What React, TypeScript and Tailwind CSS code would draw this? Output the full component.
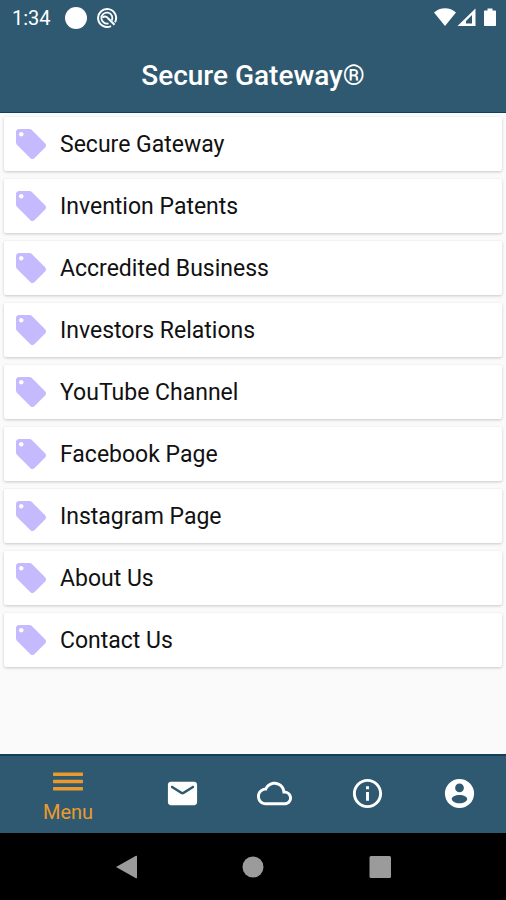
import type { ReactNode } from "react";

const links = [
  "Secure Gateway",
  "Invention Patents",
  "Accredited Business",
  "Investors Relations",
  "YouTube Channel",
  "Facebook Page",
  "Instagram Page",
  "About Us",
  "Contact Us",
];

function Glyph({ d, className }: { d: string; className: string }) {
  return (
    <svg viewBox="0 0 24 24" fill="currentColor" fillRule="evenodd" className={className} aria-hidden="true">
      <path d={d} />
    </svg>
  );
}

const TAG =
  "M21.41 11.58l-9-9C12.05 2.22 11.55 2 11 2H4c-1.1 0-2 .9-2 2v7c0 .55.22 1.05.59 1.42l9 9c.36.36.86.58 1.41.58.55 0 1.05-.22 1.41-.59l7-7c.37-.36.59-.86.59-1.41 0-.55-.23-1.06-.59-1.42zM5.5 7C4.67 7 4 6.33 4 5.5S4.67 4 5.5 4 7 4.67 7 5.5 6.33 7 5.5 7z";

const tabs = [
  {
    label: "Mail",
    d: "M20 4H4c-1.1 0-2 .9-2 2v12c0 1.1.9 2 2 2h16c1.1 0 2-.9 2-2V6c0-1.1-.9-2-2-2zM19.6 8.25l-6.54 4.09c-.65.41-1.47.41-2.12 0L4.4 8.25c-.25-.16-.4-.43-.4-.72 0-.67.73-1.07 1.3-.72L12 11l6.7-4.19c.57-.35 1.3.05 1.3.72 0 .29-.15.56-.4.72z",
  },
  {
    label: "Cloud",
    d: "M19.35 10.04C18.67 6.59 15.64 4 12 4 9.11 4 6.61 5.64 5.36 8.04 2.35 8.36 0 10.9 0 14c0 3.31 2.69 6 6 6h13c2.76 0 5-2.24 5-5 0-2.64-2.05-4.78-4.65-4.96zM19 18H6c-2.21 0-4-1.79-4-4s1.79-4 4-4h.71C7.37 7.69 9.48 6 12 6c3.04 0 5.5 2.46 5.5 5.5v.5H19c1.66 0 3 1.34 3 3s-1.34 3-3 3z",
  },
  {
    label: "Information",
    d: "M11 7h2v2h-2zm0 4h2v6h-2zm1-9C6.48 2 2 6.48 2 12s4.48 10 10 10 10-4.48 10-10S17.52 2 12 2zm0 18c-4.41 0-8-3.59-8-8s3.59-8 8-8 8 3.59 8 8-3.59 8-8 8z",
  },
  {
    label: "Account",
    d: "M12 2a10 10 0 1 0 0 20 10 10 0 0 0 0-20zM12 5.2a3 3 0 1 1 0 6 3 3 0 0 1 0-6zM12 13c3 0 5.3 1.2 5.3 2.7S15 18.6 12 18.6s-5.3-1.4-5.3-2.9S9 13 12 13z",
  },
];

function SystemButton({ label, children }: { label: string; children: ReactNode }) {
  return (
    <button type="button" aria-label={label} className="flex items-center justify-center text-[#9b9b9b]">
      <svg viewBox="0 0 24 24" fill="currentColor" className="size-6" aria-hidden="true">
        {children}
      </svg>
    </button>
  );
}

export default function App() {
  return (
    <div className="flex min-h-screen flex-col bg-[#fafafa] font-['Roboto','Liberation_Sans',sans-serif] text-[#111]">
      <header className="border-b border-[#123f59] bg-[#2f5970] text-white">
        <div className="flex h-9 items-center justify-between pr-2 pl-3">
          <div className="flex items-center">
            <span className="w-[53px] text-[20px]">1:34</span>
            <span className="size-[22px] rounded-full bg-white" />
            <svg viewBox="0 0 22 22" fill="none" stroke="currentColor" className="ml-[9px] size-[22px]" aria-hidden="true">
              <path strokeWidth="2" d="M15 19.1A9 9 0 1 1 19 15.300" />
              <path strokeWidth="1.800" d="M15.800 13.500A5.500 5.500 0 1 0 12.500 16.300" />
              <path strokeWidth="2" d="M6.500 10.500c2.500-2 4-1 5.500.7l6.500 6.600" />
            </svg>
          </div>
          <svg viewBox="0 0 64 22" fill="currentColor" className="h-[22px] w-16" aria-hidden="true">
            <path d="M0 5.500C6-.2 16-.2 22 5.500L11 19z" />
            <path fillRule="evenodd" d="M41.500 1.500V19H23.500zM38 8V16.500H32V14z" />
            <path d="M51 3.500h2.500V1.500h5v2h2.500c.6 0 1 .4 1 1V18c0 .6-.4 1-1 1H51c-.6 0-1-.4-1-1V4.500c0-.6.4-1 1-1z" />
          </svg>
        </div>
        <h1 className="flex h-[76px] items-center justify-center pt-[3px] text-[28px] font-medium">Secure Gateway®</h1>
      </header>

      <main className="flex-1 px-1 pt-1 pb-4">
        <ul className="flex flex-col gap-2">
          {links.map((name) => (
            <li key={name}>
              <a
                href="#"
                className="flex h-[54px] items-center gap-[11px] rounded-xs bg-white pl-[9px] text-[23px] shadow-[0_1px_3px_rgba(0,0,0,0.2)]"
              >
                <Glyph d={TAG} className="size-9 text-[#c5bafd]" />
                <span className="pt-[3px]">{name}</span>
              </a>
            </li>
          ))}
        </ul>
      </main>

      <nav aria-label="Main" className="flex h-[79px] border-t-2 border-[#123f59] bg-[#2f5970] text-white">
        <button type="button" className="flex w-[136px] flex-col items-center justify-center gap-1 pt-1 text-[20px] leading-6 text-[#ec9a2c]">
          <svg viewBox="0 0 30 26" fill="currentColor" className="h-[26px] w-[30px]" aria-hidden="true">
            <rect y="2.500" width="30" height="3.500" rx="0.800" />
            <rect y="9.750" width="30" height="3.500" rx="0.800" />
            <rect y="17" width="30" height="3.500" rx="0.800" />
          </svg>
          Menu
        </button>
        {tabs.map((tab) => (
          <button key={tab.label} type="button" aria-label={tab.label} className="flex flex-1 items-center justify-center pb-0.5">
            <Glyph d={tab.d} className="size-[35px]" />
          </button>
        ))}
      </nav>

      <div className="grid h-[67px] grid-cols-3 bg-black px-[12.5%]">
        <SystemButton label="Back">
          <path d="M1 12L21 .8c.5-.3 1 0 1 .5v21.400c0 .5-.5.800-1 .5z" />
        </SystemButton>
        <SystemButton label="Home">
          <circle cx="12" cy="12" r="10.500" />
        </SystemButton>
        <SystemButton label="Recent apps">
          <rect x="1.500" y="1" width="21.500" height="22" rx="1.500" />
        </SystemButton>
      </div>
    </div>
  );
}
